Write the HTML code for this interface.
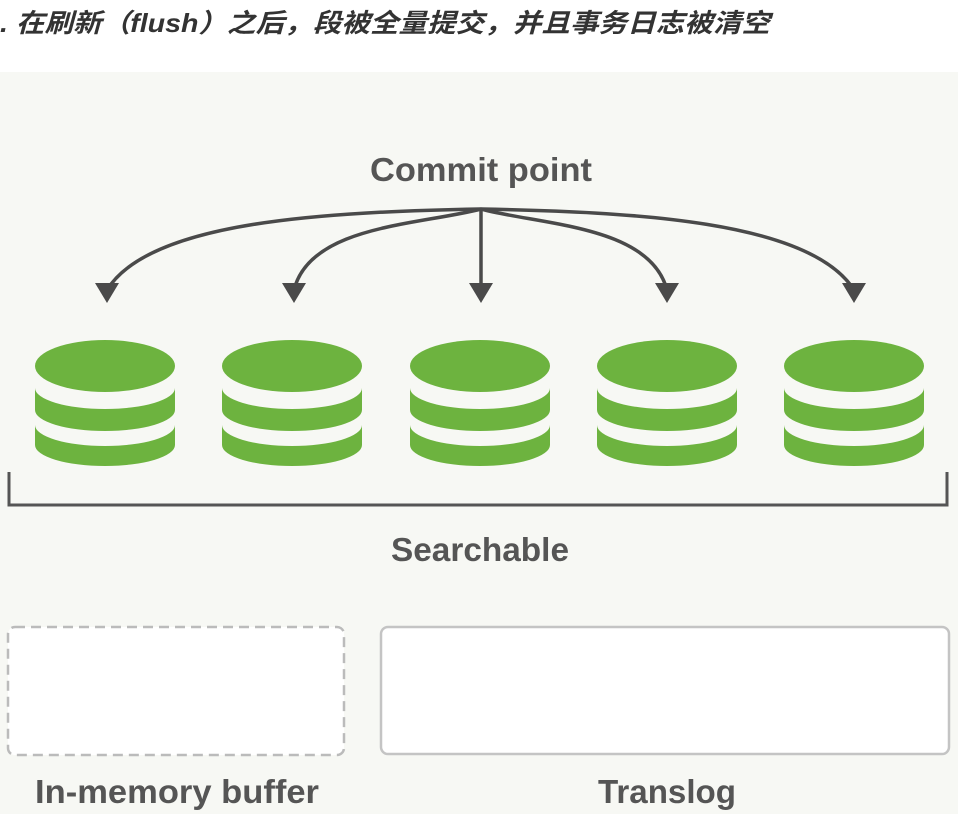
<!DOCTYPE html>
<html><head><meta charset="utf-8"><style>
html,body{margin:0;padding:0;background:#fff;}
body{width:958px;height:814px;overflow:hidden;position:relative;}
</style></head><body>
<svg width="958" height="814" viewBox="0 0 958 814" xmlns="http://www.w3.org/2000/svg" style="position:absolute;left:0;top:0">
<rect x="0" y="0" width="958" height="814" fill="#fff"/>
<rect x="0" y="72" width="958" height="742" fill="#f7f8f4"/>
<text x="0" y="32" font-family="'Liberation Sans','Noto Sans CJK SC',sans-serif" font-size="26" font-weight="bold" font-style="italic" fill="#333" textLength="770" lengthAdjust="spacingAndGlyphs">. 在刷新（flush）之后，段被全量提交，并且事务日志被清空</text>
<text x="481" y="181" text-anchor="middle" font-family="'Liberation Sans',sans-serif" font-size="33" font-weight="bold" fill="#555" textLength="222" lengthAdjust="spacingAndGlyphs">Commit point</text>
<g fill="none" stroke="#4a4a4a" stroke-width="3.5">
<path d="M481 209 C 330 212, 150 220, 107 290"/>
<path d="M481 209 C 420 225, 310 225, 294 290"/>
<path d="M481 209 L481 290"/>
<path d="M481 209 C 540 225, 650 225, 667 290"/>
<path d="M481 209 C 630 212, 810 220, 854 290"/>
</g>
<g fill="#4a4a4a">
<path d="M95 283 L119 283 L107 303 Z"/>
<path d="M282 283 L306 283 L294 303 Z"/>
<path d="M469 283 L493 283 L481 303 Z"/>
<path d="M655 283 L679 283 L667 303 Z"/>
<path d="M842 283 L866 283 L854 303 Z"/>
</g>
<defs>
<g id="cyl">
<path d="M-70 425 L-70 445 A70 21 0 0 0 70 445 L70 425 A70 21 0 0 1 -70 425 Z" fill="#6db33f"/>
<path d="M-70 388 L-70 410 A70 21 0 0 0 70 410 L70 388 A70 21 0 0 1 -70 388 Z" fill="#6db33f"/>
<ellipse cx="0" cy="366" rx="70" ry="26" fill="#6db33f"/>
</g>
</defs>
<use href="#cyl" x="105"/>
<use href="#cyl" x="292"/>
<use href="#cyl" x="480"/>
<use href="#cyl" x="667"/>
<use href="#cyl" x="854"/>
<path d="M9 472 L9 505 L947 505 L947 472" fill="none" stroke="#555" stroke-width="3"/>
<text x="480" y="561" text-anchor="middle" font-family="'Liberation Sans',sans-serif" font-size="33" font-weight="bold" fill="#555" textLength="178" lengthAdjust="spacingAndGlyphs">Searchable</text>
<rect x="8" y="627" width="336" height="128" rx="7" fill="#fff" stroke="#bbb" stroke-width="2.5" stroke-dasharray="10 6"/>
<rect x="381" y="627" width="568" height="127" rx="7" fill="#fff" stroke="#c4c4c4" stroke-width="2.5"/>
<text x="177" y="803" text-anchor="middle" font-family="'Liberation Sans',sans-serif" font-size="33" font-weight="bold" fill="#555" textLength="284" lengthAdjust="spacingAndGlyphs">In-memory buffer</text>
<text x="667" y="803" text-anchor="middle" font-family="'Liberation Sans',sans-serif" font-size="33" font-weight="bold" fill="#555" textLength="138" lengthAdjust="spacingAndGlyphs">Translog</text>
</svg>
</body></html>
